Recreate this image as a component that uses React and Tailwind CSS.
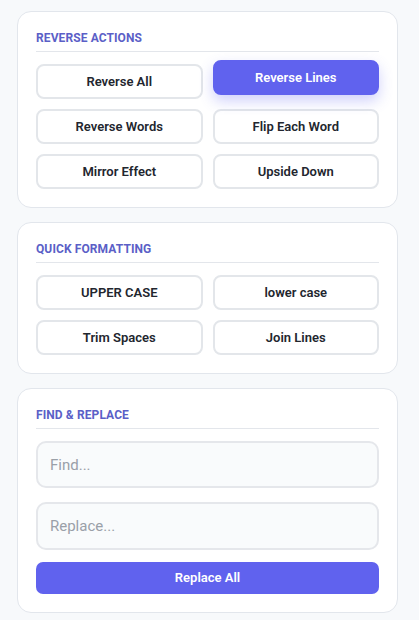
import { useState } from "react";

const reverseActions = [
  "Reverse All",
  "Reverse Lines",
  "Reverse Words",
  "Flip Each Word",
  "Mirror Effect",
  "Upside Down",
];

const formatting = ["UPPER CASE", "lower case", "Trim Spaces", "Join Lines"];

function Section({ title, children }) {
  return (
    <div className="bg-white border border-[#e2e6ec] rounded-[14px] p-[18px]">
      <h3 className="text-[12px] font-bold text-[#5b5fc7] tracking-[0.1px] leading-[14px] pt-[1px] pb-[6px] border-b border-[#e3e6eb] mb-[12px]">
        {title}
      </h3>
      {children}
    </div>
  );
}

function ActionButton({ label, active, onClick }) {
  return (
    <button
      onClick={onClick}
      className={
        active
          ? "h-[35px] rounded-[8px] border-2 border-[#6062ee] bg-[#6062ee] text-white text-[13px] font-semibold -translate-y-[4px] shadow-[0_6px_14px_rgba(99,102,241,0.3)]"
          : "h-[35px] rounded-[8px] border-2 border-[#e3e6ea] bg-white text-[#22262e] text-[13px] font-semibold"
      }
    >
      {label}
    </button>
  );
}

export default function App() {
  const [active, setActive] = useState("Reverse Lines");

  return (
    <div
      className="min-h-screen bg-[#f7f9fb] pt-[11px] pb-[6px] pl-[17px] pr-[21px] flex flex-col gap-[14px]"
      style={{ fontFamily: "Roboto, 'Liberation Sans', sans-serif" }}
    >
      <Section title="REVERSE ACTIONS">
        <div className="grid grid-cols-2 gap-x-[10px] gap-y-[10px]">
          {reverseActions.map((a) => (
            <ActionButton
              key={a}
              label={a}
              active={active === a}
              onClick={() => setActive(a)}
            />
          ))}
        </div>
      </Section>

      <Section title="QUICK FORMATTING">
        <div className="grid grid-cols-2 gap-x-[10px] gap-y-[10px]">
          {formatting.map((a) => (
            <ActionButton key={a} label={a} />
          ))}
        </div>
      </Section>

      <Section title="FIND & REPLACE">
        <div className="flex flex-col gap-[14px]">
          <input
            placeholder="Find..."
            className="h-[47px] rounded-[10px] border-2 border-[#e5e7eb] bg-[#f9fbfc] px-[12px] text-[15px] text-[#22262e] placeholder:text-[#9aa0a8] outline-none"
          />
          <input
            placeholder="Replace..."
            className="h-[48px] rounded-[10px] border-2 border-[#e5e7eb] bg-[#f9fbfc] px-[12px] text-[15px] text-[#22262e] placeholder:text-[#9aa0a8] outline-none"
          />
          <button className="h-[32px] -mt-[2px] rounded-[7px] bg-[#6062ee] text-white text-[13px] font-semibold">
            Replace All
          </button>
        </div>
      </Section>
    </div>
  );
}
